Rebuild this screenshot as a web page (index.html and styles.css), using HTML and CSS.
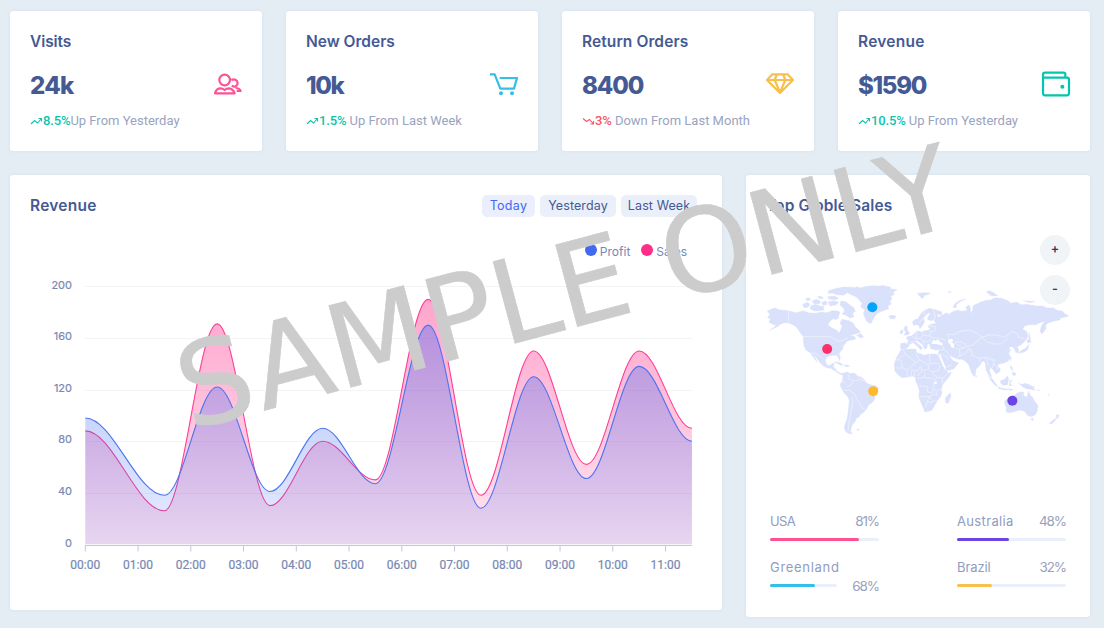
FILE: index.html
```html
<!DOCTYPE html>
<html lang="en">
<head>
<meta charset="utf-8">
<title>Dashboard</title>
<link rel="stylesheet" href="styles.css">
</head>
<body>
<main class="dashboard">
  <section class="card stat">
    <h2 class="title t-visits">Visits</h2>
    <div class="stat-row"><strong class="value v-visits">24k</strong>
      <svg class="stat-icon pink" viewBox="642 210 84 84"><circle cx="674" cy="240" r="16"/><path d="M645 280Q649 265 661 265Q668 265 674 270Q680 265 687 265Q699 266 704 280Z"/><path d="M694 240Q704 235 711 243Q716 253 707 259Q701 261 695 257M707 264Q718 264 722 273H710"/></svg></div>
    <p class="note"><svg class="trend up" viewBox="0 0 13 12"><path d="M1 9 4.5 5.5 7.5 8 11.5 3.5M8.5 3.5h3v3"/></svg><b class="up">8.5%</b>Up From Yesterday</p>
  </section>
  <section class="card stat">
    <h2 class="title t-new">New Orders</h2>
    <div class="stat-row"><strong class="value v-new">10k</strong>
      <svg class="stat-icon cyan" viewBox="630 210 84 84"><path d="M630 223H644L661 266H702L711 234H659"/><circle class="dot" cx="663" cy="280" r="6"/><circle class="dot" cx="696" cy="280" r="6"/></svg></div>
    <p class="note"><svg class="trend up" viewBox="0 0 13 12"><path d="M1 9 4.5 5.5 7.5 8 11.5 3.5M8.5 3.5h3v3"/></svg><b class="up">1.5%</b> Up From Last Week</p>
  </section>
  <section class="card stat">
    <h2 class="title t-return">Return Orders</h2>
    <div class="stat-row"><strong class="value v-return">8400</strong>
      <svg class="stat-icon gold" viewBox="648 210 84 84"><path d="M667 223H713L729 240L690 279L651 240ZM651 240H729M680 225L674 240L690 277L706 240L700 225"/></svg></div>
    <p class="note"><svg class="trend down" viewBox="0 0 13 12"><path d="M1 3.5 4.5 6.5 7.5 4.5 11.5 9M8.5 9h3V6"/></svg><b class="down">3%</b> Down From Last Month</p>
  </section>
  <section class="card stat">
    <h2 class="title t-revenue">Revenue</h2>
    <div class="stat-row"><strong class="value v-revenue">$1590</strong>
      <svg class="stat-icon teal" viewBox="636 210 84 84"><path d="M706 232V223Q706 218 701 218H645Q639 218 639 224V280Q639 286 645 286H711Q717 286 717 280V239Q717 233 711 233H640"/><circle class="dot" cx="697" cy="260" r="6"/></svg></div>
    <p class="note"><svg class="trend up" viewBox="0 0 13 12"><path d="M1 9 4.5 5.5 7.5 8 11.5 3.5M8.5 3.5h3v3"/></svg><b class="up">10.5%</b> Up From Yesterday</p>
  </section>

  <section class="card revenue">
    <header class="card-head"><h2 class="title t-revenue">Revenue</h2>
      <nav class="tabs"><a class="tab active">Today</a><a class="tab yesterday">Yesterday</a><a class="tab week">Last Week</a></nav></header>
    <div class="legend"><span class="key profit">Profit</span><span class="key sales">Sales</span></div>
    <svg class="chart" id="chart" viewBox="30 272 672 306">
      <defs>
        <linearGradient id="pinkFill" x2="0" y2="1"><stop offset="0" stop-color="#ff2e8b" stop-opacity=".43"/><stop offset="1" stop-color="#ff2e8b" stop-opacity=".12"/></linearGradient>
        <linearGradient id="blueFill" x2="0" y2="1"><stop offset="0" stop-color="#4169f1" stop-opacity=".39"/><stop offset="1" stop-color="#4169f1" stop-opacity=".13"/></linearGradient>
      </defs>
    </svg>
  </section>

  <section class="card globe">
    <h2 class="title t-globe">Top Globle Sales</h2>
    <div class="map-area">
      <svg class="map" viewBox="78 42 912 456">
        <g class="land">
          <path d="M82 123 95 117 105 114 118 119 145 122 170 128 190 122 205 128 225 130 245 126 262 128 275 122 290 122 300 126 296 138 280 146 270 154 264 164 272 172 285 178 292 182 297 190 302 180 306 168 300 160 305 148 318 150 328 152 340 160 346 170 354 178 362 186 355 190 338 194 330 198 342 198 348 206 336 210 322 213 316 220 310 228 308 238 300 246 297 252 301 262 299 272 294 262 292 256 280 256 268 258 258 262 257 274 262 286 270 286 278 280 283 280 280 290 286 296 291 304 300 308 310 312 305 315 295 310 285 302 272 295 262 294 250 288 240 278 230 264 220 252 226 264 232 277 226 270 216 256 210 248 198 240 192 228 190 212 190 200 182 190 170 172 158 164 148 160 134 158 122 163 112 170 100 176 88 181 102 172 108 166 96 162 86 156 92 148 82 142 90 134Z"/>
          <path d="M318 60 335 56 350 50 362 53 380 49 400 47 418 48 430 46 436 49 450 50 452 56 472 59 460 66 463 74 452 78 456 86 450 94 454 102 444 107 446 116 430 122 415 128 405 138 398 150 395 159 388 160 380 154 374 142 370 130 374 120 362 110 366 100 358 90 350 82 340 77 325 70Z"/>
          <path d="M266 62 284 56 310 51 338 52 345 56 330 62 320 70 310 76 290 74 280 70 264 70ZM302 93 318 95 330 105 342 114 346 124 338 130 342 140 330 144 318 136 306 132 314 122 308 112 300 106ZM212 107 226 103 240 108 250 108 252 120 240 122 224 123 210 116ZM188 103 202 97 210 103 204 112 192 113ZM196 86 208 83 212 90 200 92ZM216 93 230 88 242 94 238 102 222 101ZM232 78 246 80 250 86 238 86ZM244 98 258 92 262 103 250 106ZM264 96 280 92 296 96 288 105 270 108ZM262 80 282 78 296 84 288 89 268 88ZM274 140 288 136 298 142 286 150ZM446 138 456 136 468 138 464 146 452 147ZM350 196 362 191 371 200 362 204ZM282 276 295 276 310 284 302 286 290 279ZM312 285 322 285 330 289 318 290ZM108 284h1v1h-1ZM350 478h7v3h-6Z"/>
          <path d="M307 310 322 306 330 310 345 310 352 318 366 322 374 330 378 338 392 344 408 348 416 354 412 366 405 376 404 388 396 398 386 404 380 416 370 428 362 432 358 440 348 446 346 454 338 462 334 472 332 484 337 492 324 490 315 482 313 472 316 460 320 450 324 430 326 410 328 392 322 378 312 368 304 354 300 344 306 334 309 322Z"/>
          <g transform="translate(420 0)">
            <path d="M62 240 76 238 96 237 108 238 110 248 122 251 132 256 146 252 168 252 175 258 180 268 190 288 198 302 206 308 214 306 208 320 196 334 188 344 184 356 186 370 180 382 172 392 164 406 156 420 146 424 134 426 130 414 122 396 116 380 118 364 114 348 108 336 106 322 96 318 80 322 66 323 54 314 44 302 43 282 50 262 58 250ZM211 368 213 378 205 400 197 398 196 384Z"/>
            <path d="M62 220 82 219 86 212 78 204 84 199 94 198 104 190 110 183 118 183 124 186 134 182 146 181 151 176 144 170 148 164 160 162 168 158 160 150 150 152 142 148 145 138 152 132 146 128 138 136 130 146 134 154 128 166 120 176 115 164 110 164 100 166 97 156 103 149 114 146 122 132 132 122 148 115 162 118 186 126 184 136 170 132 176 142 186 136 196 130 202 128 206 134 216 126 232 120 246 124 262 121 257 112 266 105 271 111 272 132 278 120 280 106 290 102 302 96 318 91 330 90 346 83 364 85 385 92 392 100 410 96 424 104 440 103 470 108 488 108 502 114 520 113 530 120 548 124 555 132 567 137 554 142 542 144 540 150 520 154 506 158 497 165 498 176 486 192 480 184 484 168 494 154 480 158 468 164 450 164 434 168 428 178 440 184 444 198 438 210 424 224 412 230 417 244 408 249 404 238 398 230 386 232 392 240 386 250 392 262 384 274 370 280 356 282 352 288 362 298 358 306 348 312 338 298 331 292 328 302 336 322 328 318 318 300 316 280 310 272 306 276 298 288 288 298 286 314 280 318 272 302 266 284 256 274 246 268 234 268 216 260 206 252 214 266 222 274 236 278 222 296 196 304 186 284 172 258 176 246 178 240 166 240 152 236 148 222 142 222 141 234 134 238 128 224 112 212 106 214 122 228 128 234 122 240 114 230 100 218 90 222 84 232 74 238 62 237Z"/>
            <path d="M75 168 82 170 82 180 90 190 84 194 72 196 77 186 72 178ZM61 182 69 179 68 190 60 191ZM112 70 132 68 152 69 144 74 134 76 128 86 120 80ZM219 112 226 100 240 91 259 87 242 94 230 103 228 114ZM318 65 330 62 344 70 353 77 334 78ZM430 92 452 94 466 94 450 98ZM204 66 214 64 208 69ZM447 186 450 200 452 216 446 208ZM440 210 450 211 454 216 442 219ZM446 222 444 238 432 247 413 250 426 240 438 234ZM390 262 395 264 391 272ZM391 286 397 292 399 302 393 296ZM398 306 408 310 405 318 397 314ZM325 318 338 328 354 350 344 345 332 330ZM354 352 380 357 392 358 376 360 356 356ZM362 332 374 328 382 318 386 326 383 344 370 346 362 340ZM389 332 397 330 391 338 395 348 388 347ZM416 340 426 343 436 340 452 346 467 361 450 358 440 356 430 352ZM384 357 400 358 394 362ZM456 351 464 349 461 355ZM374 392 386 384 394 378 404 376 410 370 420 366 432 367 430 376 440 382 446 364 450 374 458 382 464 394 474 406 472 422 466 434 454 440 442 436 434 424 420 420 400 426 384 428 378 424 379 412 374 402ZM452 446 461 445 457 453ZM529 433 538 436 532 446 526 444 530 440ZM524 446 528 449 514 463 508 460ZM286 314 291 320 286 320ZM472 358 480 362 476 362ZM504 372 509 376 505 376Z"/>
          </g>
        </g>
        <g class="seas" transform="translate(420 0)"><path d="M154 222 160 210 168 212 174 208 178 214 190 222 184 226 168 222ZM206 208 216 206 220 212 214 216 222 222 222 234 214 232 210 222 204 216ZM163 337 169 334 171 341 165 343ZM175 254 180 252 196 290 198 304 190 290Z"/></g>
        <g class="borders">
          <path d="M145 122V160M190 200H270L284 207 292 213 304 213 324 204M210 248 232 252 244 262 257 272M328 310 326 326 340 332 332 346 320 350M340 332 356 332 358 322M366 322 364 332 378 332M306 334 318 338M314 362 330 360 346 376 350 388 360 400 364 412 374 418M330 386 340 384M340 388 334 420 328 450 324 484"/>
          <g transform="translate(420 0)"><path d="M70 240 76 252 50 270M76 252 108 278 118 270 108 250M118 270 124 272 146 286 150 280 148 252M148 280 176 280M50 270 62 270 68 294 48 294M68 294 84 300 94 288 108 278M94 300 114 302 122 288M80 302 82 320M94 302 94 318M104 302 102 318M122 288 126 302 112 318M126 302 146 298 146 286M146 298 156 306 174 302 180 286M156 306 170 322 188 324 206 308M170 322 162 336 160 356 170 364 184 358M114 326 128 322 146 324 162 326M118 346 132 350 142 348 142 366 156 368 160 356M116 380 148 380 142 394 136 412M148 380 162 372 170 376 168 366M148 380 160 394 170 392M142 394 152 398 160 394M132 322 136 308M188 324 188 344"/>
            <path d="M76 220 86 222M90 216 104 216M96 198 108 208 106 216M112 184 108 206 122 204 130 196 124 184M130 196 148 198 154 182M148 198 160 204 178 204 200 212M122 204 130 214 148 214 154 206M130 214 132 224M146 166 156 170 168 170 164 184 148 184M160 118 166 140 160 152M132 122 136 136 118 158M206 206 204 192 224 194 238 184 256 182 270 180 292 190 306 202 318 198 330 194 354 196 374 202 386 194 394 184 408 188 418 204 430 204 438 212M306 202 318 214 342 222 364 222 378 210 386 202M306 202 292 212 278 226 262 228 246 216 224 216M222 234 238 238 262 230M238 238 240 258 230 266M262 230 274 242 278 258 298 264 314 262 320 272M240 258 258 248 264 238 274 242M176 240 194 238 206 252M188 226 190 238M222 216 236 228 254 234M320 272 326 288M334 268 342 280 336 294M342 280 356 300M298 264 300 278M314 262 334 268 348 272M180 252 200 260 204 270M196 292 214 286"/></g>
        </g>
        <g class="pins"><circle cx="397" cy="112" r="15" fill="#03a5fc"/><circle cx="261.500" cy="237" r="15" fill="#fc316c"/><circle cx="399.500" cy="364" r="15" fill="#fdb92c"/><circle cx="817" cy="392" r="15" fill="#6b45e1"/></g>
      </svg>
      <div class="zoom-buttons"><button class="zoom-button">+</button><button class="zoom-button minus">-</button></div>
    </div>
    <div class="countries">
      <div class="country"><div class="info"><span class="usa">USA</span><div class="bar"><i class="fill pink-bg" style="width:81.500%"></i></div></div><em>81%</em></div>
      <div class="country"><div class="info"><span class="australia">Australia</span><div class="bar"><i class="fill purple-bg" style="width:48%"></i></div></div><em>48%</em></div>
      <div class="country wrapped"><div class="info"><span class="greenland">Greenland</span><div class="bar"><i class="fill cyan-bg" style="width:67.500%"></i></div></div><em>68%</em></div>
      <div class="country"><div class="info"><span class="brazil">Brazil</span><div class="bar"><i class="fill gold-bg" style="width:32%"></i></div></div><em>32%</em></div>
    </div>
  </section>
</main>
<svg class="watermark" viewBox="0 0 1104 628"><text transform="translate(190 430.300) rotate(-15)">SAMPLE ONLY</text></svg>
<script src="chart.js"></script>
</body>
</html>
```
FILE: styles.css
```css
* { box-sizing: border-box; margin: 0; padding: 0; }
body { width: 1104px; height: 628px; overflow: hidden; background: #e4ecf4; font-family: Inter, "Open Sans", sans-serif; color: #455a94; }
.dashboard { display: grid; grid-template-columns: repeat(4, 252px); grid-template-rows: 140px 442px; gap: 24px; padding: 11px 10px; align-items: start; }
.card { background: #fff; border-radius: 3px; box-shadow: 0 0 3px rgba(130, 160, 190, .16); }
.title { font-size: 15.5px; font-weight: 600; line-height: 22px; white-space: nowrap; }
.t-visits { letter-spacing: -.1px; }
.t-new { letter-spacing: 0; }
.t-return { letter-spacing: .1px; }
.t-revenue { letter-spacing: .25px; }
.t-globe { letter-spacing: .1px; }
.stat { height: 140px; padding: 20px; }
.stat-row { display: flex; justify-content: space-between; align-items: center; height: 28px; margin-top: 18px; }
.value { padding-top: 2px; font-size: 24px; font-weight: 850; line-height: 28px; }
.v-visits { letter-spacing: -.7px; }
.v-new { letter-spacing: -1.3px; }
.v-return { letter-spacing: -1.1px; }
.v-revenue { letter-spacing: -1.3px; }
.stat-icon { width: 28px; height: 28px; margin-bottom: 2px; fill: none; stroke: currentColor; stroke-width: 6.6; stroke-linejoin: round; overflow: visible; }
.stat-icon .dot { fill: currentColor; stroke: none; }
.pink { color: #ff5295; }
.cyan { color: #32bfea; }
.gold { color: #f8c04b; }
.teal { color: #04c5ad; }
.note { display: flex; align-items: center; margin-top: 12px; height: 20px; font: 13px/20px Roboto, sans-serif; color: #9aa3c0; white-space: pre; }
.note b { font-weight: 500; letter-spacing: -.15px; }
.trend { width: 13px; height: 12px; fill: none; stroke: currentColor; stroke-width: 1.1; }
.up { color: #0ac5ad; }
.down { color: #f95565; }
.revenue { grid-column: span 3; width: 712px; height: 435px; padding: 20px; }
.card-head { display: flex; justify-content: space-between; }
.tabs { display: flex; gap: 5px; margin-right: 5px; }
.tab { height: 22px; border-radius: 5px; background: #eaeff9; font-size: 12.5px; line-height: 22px; text-align: center; white-space: nowrap; width: 76px; letter-spacing: .1px; }
.tab.active { width: 53px; color: #4169f1; background: #eaeefd; letter-spacing: .3px; }
.legend { display: flex; justify-content: flex-end; gap: 11px; height: 16px; margin: 27px 15px 0 0; font-size: 12px; line-height: 16px; color: #7888b3; }
.key { display: flex; gap: 3px; }
.key::before { content: ""; width: 12px; height: 12px; border-radius: 50%; }
.profit::before { background: #4169f1; }
.sales::before { background: #ff2e8b; }
.chart { display: block; width: 672px; height: 306px; margin-top: 12px; }
.grid-line { stroke: #f2f4f6; stroke-width: 1; }
.axis { stroke: #c0c8df; stroke-width: 1; fill: none; }
.y-label { font: 11px Inter, sans-serif; fill: #7888b3; stroke: #7888b3; stroke-width: .2; text-anchor: end; }
.x-label { font: 12px Roboto, sans-serif; fill: #7888b3; stroke: #7888b3; stroke-width: .2; text-anchor: middle; }
.pink-line { fill: none; stroke: #ff3e92; stroke-width: 1.1; }
.blue-line { fill: none; stroke: #4b73f1; stroke-width: 1.1; }
.globe { grid-column: 4; width: 344px; height: 442px; margin-left: -92px; padding: 20px; }
.map-area { position: relative; height: 275px; padding-top: 67px; }
.map { display: block; width: 304px; height: 152px; }
.land { fill: #dae1fb; stroke: #dae1fb; stroke-width: 1; }
.seas { fill: #fff; }
.borders { fill: none; stroke: #f3f5ff; stroke-width: 2; }
.zoom-buttons { position: absolute; top: 18px; right: 0; display: grid; gap: 10px; }
.zoom-button { width: 30px; height: 30px; padding-bottom: 2px; border: 0; border-radius: 50%; background: #f0f4f6; color: #303a60; font: 600 12.5px/28px Inter, sans-serif; text-align: center; }
.countries { display: grid; grid-template-columns: 109px 109px; justify-content: space-between; row-gap: 4px; margin: 19px 4px 0; }
.country { position: relative; height: 42px; font-size: 13px; line-height: 20px; color: #919cc1; }
.country em { position: absolute; top: 0; right: 0; font-style: normal; font-size: 13.5px; letter-spacing: -1.1px; color: #98a1be; }
.usa { letter-spacing: -.6px; }
.australia { letter-spacing: .35px; }
.greenland { letter-spacing: .7px; }
.brazil { letter-spacing: -.1px; }
.bar { height: 3px; margin-top: 7px; border-radius: 2px; background: #eaf0fa; }
.fill { display: block; height: 3px; border-radius: 2px; }
.wrapped .bar { width: 67px; }
.wrapped em { top: 19px; }
.pink-bg { background: #ff5295; }
.purple-bg { background: #6b45e1; }
.cyan-bg { background: #32bfea; }
.gold-bg { background: #fac04b; }
.watermark { position: absolute; inset: 0; width: 1104px; height: 628px; pointer-events: none; }
.watermark text { font: 116px "DejaVu Sans", sans-serif; fill: #ccc; stroke: #ccc; stroke-width: .6; }
```
FILE: chart.js
```js
const chart = document.getElementById("chart");
const hour = 52.75, left = 85.3, base = 544.3, unit = 1.289;
const hours = [0, 1.5, 2.5, 3.5, 4.5, 5.5, 6.5, 7.5, 8.5, 9.5, 10.5, 11.5];
const sales = [88, 26, 171, 30, 80, 50, 190, 38, 150, 62, 150, 90];
const profit = [98, 38, 122, 41, 90, 47, 170, 28, 130, 51, 138, 80];

function add(name, attrs, text) {
  const el = document.createElementNS("http://www.w3.org/2000/svg", name);
  for (const key in attrs) el.setAttribute(key, attrs[key]);
  if (text !== undefined) el.textContent = text;
  chart.appendChild(el);
}

function curve(values) {
  let d = "";
  values.forEach((v, i) => {
    const x = left + hours[i] * hour, y = base - v * unit;
    if (i === 0) { d = `M${x} ${y}`; return; }
    const px = left + hours[i - 1] * hour, py = base - values[i - 1] * unit;
    const c = (x - px) * 0.35;
    d += `C${px + c} ${py} ${x - c} ${y} ${x} ${y}`;
  });
  return d;
}

for (let v = 0; v <= 200; v += 40) {
  const y = base - v * unit;
  if (v) add("path", { class: "grid-line", d: `M85 ${Math.round(y)+0.5}H692` });
  add("text", { class: "y-label", x: 72, y: y + 2.2 }, v);
}
const end = left + 11.5 * hour;
add("path", { d: curve(sales) + `V${base}H${left}Z`, fill: "url(#pinkFill)" });
add("path", { class: "pink-line", d: curve(sales) });
add("path", { d: curve(profit) + `V${base}H${left}Z`, fill: "url(#blueFill)" });
add("path", { class: "blue-line", d: curve(profit) });
add("path", { class: "axis", d: `M85 545.5H${end}` });
for (let h = 0; h < 12; h++) {
  const x = left + h * hour;
  add("path", { class: "axis", d: `M${x} 545V551.500` });
  add("text", { class: "x-label", x: x, y: 569 }, String(h).padStart(2, "0") + ":00");
}
```
